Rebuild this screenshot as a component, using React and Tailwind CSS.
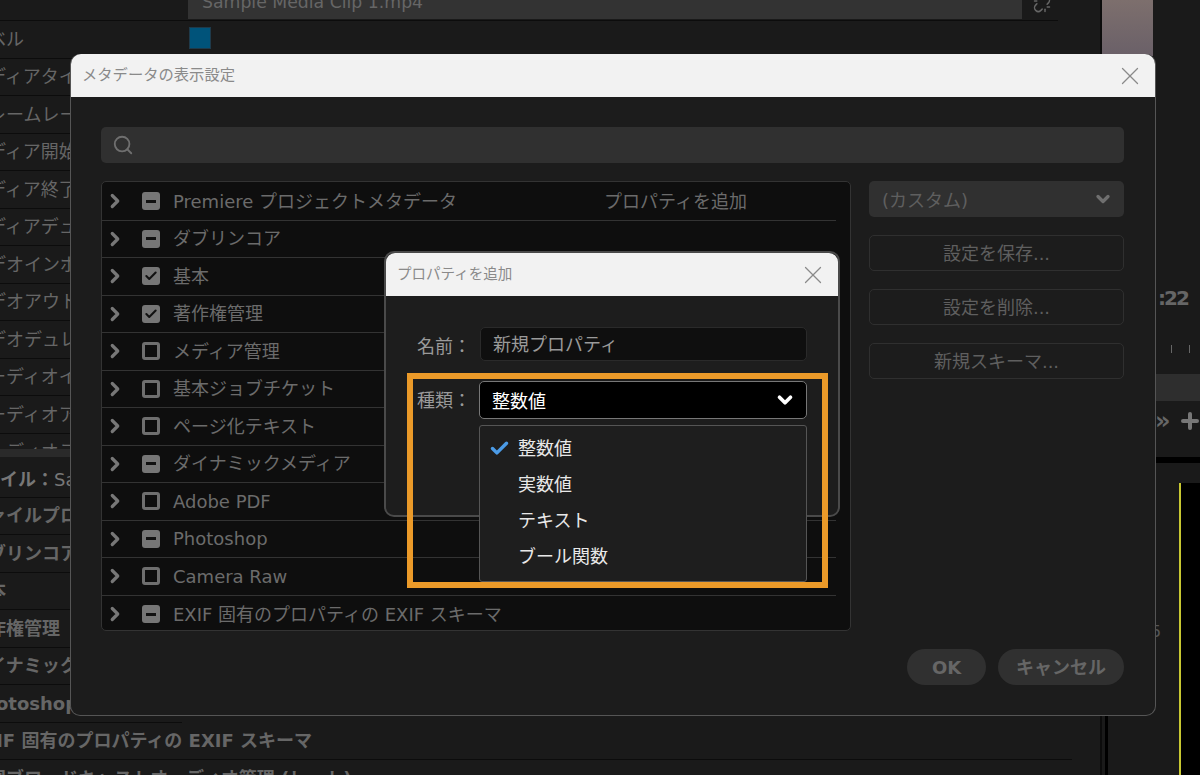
import { Check, ChevronDown, ChevronRight, Plus, Search, Unlink, X } from 'lucide-react';

const font = '[font-family:"DejaVu_Sans","Noto_Sans_CJK_JP",sans-serif]';

const bgRows = [
  'ラベル',
  'メディアタイプ',
  'フレームレート',
  'メディア開始',
  'メディア終了',
  'メディアデュレーション',
  'ビデオインポイント',
  'ビデオアウトポイント',
  'ビデオデュレーション',
  'オーディオインポイント',
  'オーディオアウトポイント',
];

const boldRows = [
  'ファイルプロパティ',
  'ダブリンコア',
  '基本',
  '著作権管理',
  'ダイナミックメディア',
  'Photoshop',
  'EXIF 固有のプロパティの EXIF スキーマ',
  '米国ブロードキャストオーディオ管理 (レート)',
];

const schemas = [
  { name: 'Premiere プロジェクトメタデータ', state: 'mixed', extra: 'プロパティを追加' },
  { name: 'ダブリンコア', state: 'mixed' },
  { name: '基本', state: 'checked' },
  { name: '著作権管理', state: 'checked' },
  { name: 'メディア管理', state: 'empty' },
  { name: '基本ジョブチケット', state: 'empty' },
  { name: 'ページ化テキスト', state: 'empty' },
  { name: 'ダイナミックメディア', state: 'mixed' },
  { name: 'Adobe PDF', state: 'empty' },
  { name: 'Photoshop', state: 'mixed' },
  { name: 'Camera Raw', state: 'empty' },
  { name: 'EXIF 固有のプロパティの EXIF スキーマ', state: 'mixed' },
];

function Box({ state }) {
  if (state === 'empty') {
    return <div className="h-[18px] w-[18px] shrink-0 rounded-[3px] border-[3px] border-[#6f6f6f]" />;
  }
  return (
    <div className="flex h-[18px] w-[18px] shrink-0 items-center justify-center rounded-[3px] bg-[#767676]">
      {state === 'mixed' ? (
        <div className="h-[3px] w-[10px] bg-[#111]" />
      ) : (
        <Check className="h-[14px] w-[14px] text-[#111]" strokeWidth={3.5} />
      )}
    </div>
  );
}

function SchemaRow({ row, last }) {
  return (
    <div className={`mr-[14px] flex h-[37.5px] items-center ${last ? '' : 'border-b border-[#333]'}`}>
      <ChevronRight className="ml-[2px] h-[22px] w-[22px] shrink-0 text-[#777]" strokeWidth={3.5} />
      <div className="ml-[16px]">
        <Box state={row.state} />
      </div>
      <span className="ml-[13px] whitespace-nowrap text-[18px] text-[#6b6b6b]">{row.name}</span>
      {row.extra && <span className="mr-[89px] ml-auto whitespace-nowrap text-[18px] text-[#6b6b6b]">{row.extra}</span>}
    </div>
  );
}

function SideButton({ children }) {
  return (
    <button
      type="button"
      className="flex h-[36px] w-full items-center justify-center rounded-[5px] border border-[#2f2f2f] text-[18px] text-[#5f5f5f]"
    >
      {children}
    </button>
  );
}

function Background() {
  return (
    <div className="flex h-[775px] w-[1200px] overflow-hidden bg-[#1a1a1a]">
      <div className="w-[1102px] shrink-0 border-r-[2px] border-[#0c0c0c]">
        <div className="flex h-[21px] w-[1058px] items-end border-b border-[#0c0c0c]">
          <div className="mb-[1px] ml-[188px] flex h-[30px] w-[834px] shrink-0 items-center bg-[#333] px-[14px] pb-[2px] text-[17.3px] text-[#666]">
            Sample Media Clip 1.mp4
          </div>
          <Unlink className="mb-[7px] ml-[11px] h-[18px] w-[18px] text-[#666]" />
        </div>
        <div className="flex">
          <div className="w-[182px] shrink-0 overflow-hidden">
            {bgRows.map((text) => (
              <div key={text} className="flex h-[37.5px] items-center border-b border-[#0c0c0c] text-[18px] whitespace-nowrap text-[#666]">
                <span className="ml-[-30px]">{text}</span>
              </div>
            ))}
            <div className="h-[15px] overflow-hidden text-[18px] leading-[36px] whitespace-nowrap text-[#666]">
              <span className="ml-[-30px] block">オーディオデュレーション</span>
            </div>
            <div className="h-[8px] bg-[#2a2a2a]" />
            <div className="flex h-[41px] items-center border-b border-[#0c0c0c] pt-[5px] text-[18px] whitespace-nowrap text-[#777]">
              <span className="ml-[-36px] font-bold">ファイル：</span>
              <span>Sample</span>
            </div>
            {boldRows.slice(0, 6).map((text) => (
              <div key={text} className="flex h-[37.5px] items-center border-b border-[#0c0c0c] text-[18px] font-bold whitespace-nowrap text-[#666]">
                <span className="ml-[-30px]">{text}</span>
              </div>
            ))}
          </div>
          <div className="pt-[6px] pl-[7px]">
            <div className="h-[22px] w-[22px] border border-[#1f3a4a] bg-[#00537a]" />
          </div>
        </div>
        {boldRows.slice(6).map((text) => (
          <div key={text} className="flex h-[37.5px] w-[1072px] items-center border-b border-[#0c0c0c] text-[18px] font-bold whitespace-nowrap text-[#666]">
            <span className="ml-[-30px]">{text}</span>
          </div>
        ))}
      </div>

      <div className="flex flex-1 flex-col">
        <div className="h-[56px] w-[51px] shrink-0 bg-gradient-to-b from-[#7d6f6d] to-[#6a6068]" />
        <div className="mt-[226px] ml-[56px] text-[20px] leading-[32px] font-bold tracking-[-2px] text-[#666]">:22</div>
        <div className="mt-[31px] ml-[69px] flex gap-[17px]">
          <div className="h-[8px] w-px bg-[#666]" />
          <div className="h-[8px] w-px bg-[#666]" />
        </div>
        <div className="mt-[21px] h-[27px] shrink-0 bg-[#2e2e2e]" />
        <div className="mt-[8px] flex h-[24px] shrink-0 items-center pl-[53px]">
          <span className="text-[24px] font-bold text-[#666]">»</span>
          <Plus className="ml-[7px] h-[24px] w-[24px] text-[#777]" strokeWidth={4} />
        </div>
        <div className="mt-[24px] h-[6px] shrink-0 bg-black" />
        <div className="ml-[3px] flex flex-1 border-l-[3px] border-black">
          <div className="w-[71px] shrink-0 pt-[157px] pl-[43px] text-[16px] text-[#555]">5</div>
          <div className="mt-[20px] flex-1 border-l-[2px] border-[#c8c832] bg-black" />
        </div>
      </div>
    </div>
  );
}

function MainDialog() {
  return (
    <div className="absolute top-[54px] left-[70px] flex h-[662px] w-[1086px] flex-col rounded-[10px] border-r border-b border-l border-[#555] bg-[#1c1c1c]">
      <div className="flex h-[43px] shrink-0 items-center justify-between rounded-t-[10px] bg-[#f2f2f2] pr-[10px] pl-[11px]">
        <span className="text-[15.3px] text-[#8a8a8a]">メタデータの表示設定</span>
        <X className="h-[30px] w-[30px] text-[#8a8a8a]" strokeWidth={1} />
      </div>
      <div className="flex flex-1 flex-col pt-[30px] pr-[31px] pl-[30px]">
        <div className="flex h-[36px] items-center rounded-[5px] bg-[#303030] pl-[11px]">
          <Search className="h-[22px] w-[22px] text-[#6f6f6f]" strokeWidth={2} />
        </div>
        <div className="mt-[18px] flex gap-[18px]">
          <div className="h-[450px] w-[750px] shrink-0 rounded-[5px] border border-[#333] bg-[#0e0e0e] pt-[1px]">
            {schemas.map((row, i) => (
              <SchemaRow key={row.name} row={row} last={i === schemas.length - 1} />
            ))}
          </div>
          <div className="flex w-[255px] shrink-0 flex-col gap-[18px]">
            <div className="flex h-[36px] items-center justify-between rounded-[5px] bg-[#303030] pr-[11px] pl-[13px] text-[18px] text-[#5f5f5f]">
              <span className="pt-[2px]">(カスタム)</span>
              <ChevronDown className="h-[20px] w-[20px] text-[#6f6f6f]" strokeWidth={4} />
            </div>
            <SideButton>設定を保存...</SideButton>
            <SideButton>設定を削除...</SideButton>
            <SideButton>新規スキーマ...</SideButton>
          </div>
        </div>
        <div className="mt-[18px] flex justify-end gap-[12px]">
          <button type="button" className="h-[36px] w-[79px] rounded-full bg-[#303030] text-[18px] font-bold text-[#666]">
            OK
          </button>
          <button type="button" className="h-[36px] w-[126px] rounded-full bg-[#303030] text-[18px] font-bold text-[#666]">
            キャンセル
          </button>
        </div>
      </div>
    </div>
  );
}

function PropertyDialog() {
  return (
    <div className="absolute top-[251px] left-[384px] h-[266px] w-[456px] rounded-[10px] border-2 border-[#4a4a4a] bg-[#1d1d1d]">
      <div className="flex h-[43px] items-center justify-between rounded-t-[9px] bg-[#f2f2f2] pr-[10px] pl-[11px]">
        <span className="text-[14.5px] text-[#8a8a8a]">プロパティを追加</span>
        <X className="h-[30px] w-[30px] text-[#8a8a8a]" strokeWidth={1} />
      </div>
      <div className="flex items-start pt-[31px] pl-[31px]">
        <span className="w-[63px] shrink-0 pt-[6px] text-[18px] text-[#9a9a9a]">名前：</span>
        <div className="flex h-[34px] w-[327px] items-center rounded-[5px] border border-[#2a2a2a] bg-[#0f0f0f] pl-[12px] text-[18px] text-[#9a9a9a]">
          新規プロパティ
        </div>
      </div>
    </div>
  );
}

function TypeMenu() {
  return (
    <div className="absolute top-[373px] left-[407px] flex h-[215px] w-[421px] border-[6px] border-[#eb9a29] pt-[2px] pl-[4px]">
      <span className="mt-[6px] w-[62px] shrink-0 text-[18px] text-[#9a9a9a]">種類：</span>
      <div className="w-[328px]">
        <div className="flex h-[38px] items-center justify-between rounded-[5px] border border-[#777] bg-black pr-[10px] pl-[12px] text-[18px] text-white">
          <span className="pt-[2px]">整数値</span>
          <ChevronDown className="h-[22px] w-[22px] text-white" strokeWidth={4} />
        </div>
        <div className="mt-[6px] h-[157px] rounded-[3px] border border-[#555] bg-[#1e1e1e] pt-[4px]">
          <div className="flex h-[36px] items-center text-[18px] text-[#e8e8e8]">
            <Check className="ml-[9px] h-[21px] w-[21px] text-[#4b9be6]" strokeWidth={4} />
            <span className="ml-[8px]">整数値</span>
          </div>
          <div className="flex h-[36px] items-center pl-[38px] text-[18px] text-[#e8e8e8]">実数値</div>
          <div className="flex h-[36px] items-center pl-[38px] text-[18px] text-[#e8e8e8]">テキスト</div>
          <div className="flex h-[36px] items-center pl-[38px] text-[18px] text-[#e8e8e8]">ブール関数</div>
        </div>
      </div>
    </div>
  );
}

export default function App() {
  return (
    <div className={`relative h-[775px] w-[1200px] overflow-hidden ${font}`}>
      <Background />
      <MainDialog />
      <PropertyDialog />
      <TypeMenu />
    </div>
  );
}
